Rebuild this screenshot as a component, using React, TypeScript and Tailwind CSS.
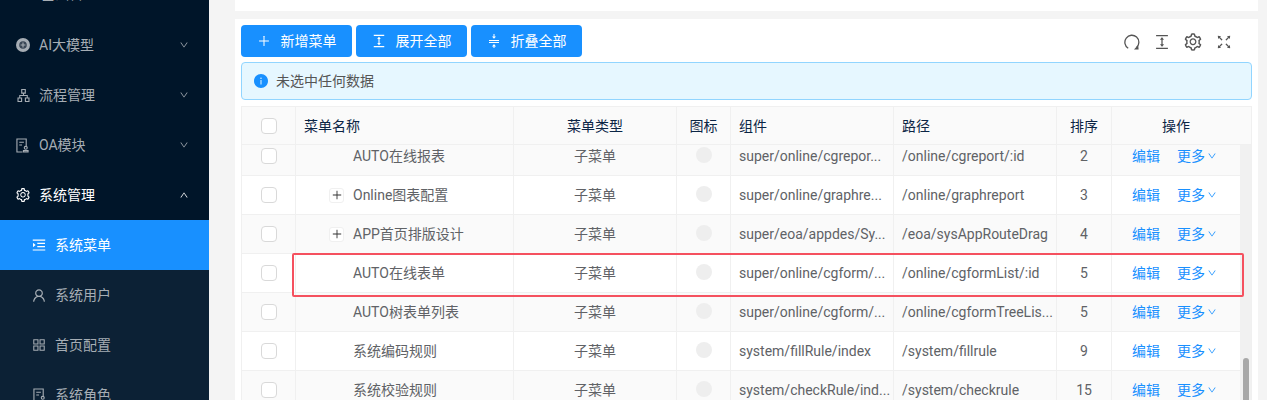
import React from "react";
import {
  AiFillInfoCircle,
  AiOutlineApartment,
  AiOutlineAppstore,
  AiOutlineColumnHeight,
  AiOutlineDown,
  AiOutlineFullscreen,
  AiOutlineMenuUnfold,
  AiOutlinePlus,
  AiOutlineSetting,
  AiOutlineUp,
  AiOutlineUser,
} from "react-icons/ai";

const DocIcon = ({ className }: { className?: string }) => (
  <svg viewBox="0 0 14 16" className={className} fill="none" stroke="currentColor" strokeWidth="1.2">
    <path d="M7 15H1V1h10v8" />
    <path d="M3.5 4.5h5M3.5 7.5h3" />
    <circle cx="10.5" cy="10.5" r="1.6" />
    <path d="M8 15v-1.5h5V15z" />
  </svg>
);

const AiModelIcon = ({ className }: { className?: string }) => (
  <svg viewBox="0 0 14 14" className={className}>
    <circle cx="7" cy="7" r="7" fill="currentColor" />
    <circle cx="7" cy="7" r="3.8" fill="#3a4756" />
    <path d="M7 4.6v4.8M4.6 7h4.8" stroke="currentColor" strokeWidth="1.1" />
  </svg>
);

const RefreshIcon = ({ className }: { className?: string }) => (
  <svg viewBox="0 0 16 16" className={className} fill="none">
    <path d="M4.2 14.2A7 7 0 1 1 12.6 13.4" stroke="currentColor" strokeWidth="1.3" />
    <path d="M10 15.6l4.6-.2-.4-4.4z" fill="currentColor" />
  </svg>
);

const CollapseIcon = ({ className }: { className?: string }) => (
  <svg viewBox="0 0 14 14" className={className} fill="currentColor">
    <path d="M2 5.9h10v1H2zM2 7.9h10v1H2z" />
    <path d="M7 4.7L5 2.4h1.5V0h1v2.4H9zM7 10.1l2 2.3H7.5V14h-1v-1.6H5z" />
  </svg>
);

const topMenu = [
  { label: "AI大模型", icon: <AiModelIcon className="h-[14px] w-[14px]" /> },
  { label: "流程管理", icon: <AiOutlineApartment className="text-[15px]" /> },
  { label: "OA模块", icon: <DocIcon className="h-[15px] w-[13px]" /> },
];

const subMenu = [
  { label: "系统用户", icon: <AiOutlineUser className="text-[17px]" /> },
  { label: "首页配置", icon: <AiOutlineAppstore className="text-[16px]" /> },
  { label: "系统角色", icon: <DocIcon className="h-[15px] w-[13px]" /> },
];

const rows = [
  { name: "AUTO在线报表", comp: "super/online/cgrepor...", path: "/online/cgreport/:id", sort: 2 },
  { name: "Online图表配置", comp: "super/online/graphre...", path: "/online/graphreport", sort: 3, tree: true },
  { name: "APP首页排版设计", comp: "super/eoa/appdes/Sy...", path: "/eoa/sysAppRouteDrag", sort: 4, tree: true },
  { name: "AUTO在线表单", comp: "super/online/cgform/...", path: "/online/cgformList/:id", sort: 5 },
  { name: "AUTO树表单列表", comp: "super/online/cgform/...", path: "/online/cgformTreeLis...", sort: 5 },
  { name: "系统编码规则", comp: "system/fillRule/index", path: "/system/fillrule", sort: 9 },
  { name: "系统校验规则", comp: "system/checkRule/ind...", path: "/system/checkrule", sort: 15 },
];

const grid = "grid grid-cols-[54px_218px_163px_54px_163px_163px_55px_1fr]";
const cell = "flex items-center border-r border-[#f0f0f0] min-w-0";

const Checkbox = () => (
  <span className="h-4 w-4 rounded-[4px] border border-[#d9d9d9] bg-white" />
);

const ToolButton = ({ icon, label }: { icon: React.ReactNode; label: string }) => (
  <button className="flex h-8 w-[111px] items-center justify-center gap-[10px] rounded-[4px] bg-[#1890ff] text-sm text-white">
    {icon}
    <span>{label}</span>
  </button>
);

export default function App() {
  return (
    <div className="flex h-[400px] w-[1267px] overflow-hidden bg-[#f4f4f4] font-['Roboto','Noto_Sans_CJK_SC',sans-serif] text-sm">
      <aside className="w-[209px] shrink-0 bg-[#001529] text-[#a6adb4]">
        <div className="-mt-[30px] flex h-[50px] items-center pb-[3px] pl-[41px]">
          <span>基础管理</span>
        </div>
        {topMenu.map((item) => (
          <div key={item.label} className="flex h-[50px] items-center pl-4 pr-5">
            <span className="flex w-[23px] justify-start">{item.icon}</span>
            <span className="flex-1">{item.label}</span>
            <AiOutlineDown className="text-[10px]" />
          </div>
        ))}
        <div className="flex h-[50px] items-center pl-[15px] pr-5 text-white">
          <AiOutlineSetting className="mr-2 text-[16px]" />
          <span className="flex-1">系统管理</span>
          <AiOutlineUp className="text-[10px]" />
        </div>
        <div className="bg-[#0c2135]">
          <div className="flex h-[50px] items-center bg-[#1890ff] pl-[31px] text-white">
            <AiOutlineMenuUnfold className="mr-2 text-[16px]" />
            <span>系统菜单</span>
          </div>
          {subMenu.map((item) => (
            <div key={item.label} className="flex h-[50px] items-center pl-[31px]">
              <span className="mr-2 flex w-4 justify-center">{item.icon}</span>
              <span>{item.label}</span>
            </div>
          ))}
        </div>
      </aside>

      <main className="relative flex-1 pl-[26px] pr-[9px]">
        <div className="h-[11px] bg-white" />
        <section className="mt-2 h-[400px] bg-white px-[6px] pt-[6px]">
          <div className="flex h-8 items-center gap-1">
            <ToolButton icon={<AiOutlinePlus className="text-sm" />} label="新增菜单" />
            <ToolButton icon={<AiOutlineColumnHeight className="-mx-px text-base" />} label="展开全部" />
            <ToolButton icon={<CollapseIcon className="h-[14px] w-[14px]" />} label="折叠全部" />
            <div className="ml-auto flex items-center gap-3 pr-[19px] pt-[2px] text-[#555]">
              <RefreshIcon className="mr-px h-4 w-4" />
              <AiOutlineColumnHeight className="text-[18px]" />
              <AiOutlineSetting className="text-[20px]" />
              <AiOutlineFullscreen className="text-[18px]" />
            </div>
          </div>

          <div className="mt-[5px] flex h-[38px] items-center gap-[7px] rounded-[4px] border border-[#91d5ff] bg-[#e6f7ff] pl-[11px] text-[#555]">
            <AiFillInfoCircle className="text-[16px] text-[#1890ff]" />
            <span>未选中任何数据</span>
          </div>

          <div className="mt-[6px] border-x border-t border-[#f0f0f0]">
            <div className={`${grid} h-[38px] border-b border-[#f0f0f0] bg-[#fafafa] text-[#0b2545]`}>
              <div className={`${cell} justify-center`}><Checkbox /></div>
              <div className={`${cell} pl-2`}>菜单名称</div>
              <div className={`${cell} justify-center`}>菜单类型</div>
              <div className={`${cell} justify-center`}>图标</div>
              <div className={`${cell} pl-2`}>组件</div>
              <div className={`${cell} pl-2`}>路径</div>
              <div className={`${cell} justify-center`}>排序</div>
              <div className="flex items-center justify-center pr-[11px]">操作</div>
            </div>
            <div className="flex h-[256px] overflow-hidden">
              <div className="-mt-2 min-w-0 flex-1">
                {rows.map((row, i) => (
                  <div
                    key={row.name}
                    className={`${grid} h-[39px] border-b border-[#f0f0f0] text-[#606266] ${i % 2 === 0 ? "bg-[#fafafa]" : "bg-white"}`}
                  >
                    <div className={`${cell} justify-center`}><Checkbox /></div>
                    <div className={`${cell} pl-[33px]`}>
                      <span className="flex w-6 justify-start">
                        {row.tree && (
                          <span className="flex h-[15px] w-[15px] items-center justify-center rounded-[3px] border border-[#f0f0f0] bg-white">
                            <AiOutlinePlus className="text-xs text-[#333]" />
                          </span>
                        )}
                      </span>
                      <span>{row.name}</span>
                    </div>
                    <div className={`${cell} justify-center`}>子菜单</div>
                    <div className={`${cell} justify-center pb-[3px]`}>
                      <span className="h-4 w-4 rounded-full bg-[#eeeeee]" />
                    </div>
                    <div className={`${cell} pl-2 whitespace-nowrap`}>{row.comp}</div>
                    <div className={`${cell} pl-2 whitespace-nowrap`}>{row.path}</div>
                    <div className={`${cell} justify-center`}>{row.sort}</div>
                    <div className="flex items-center pl-5 text-[#1890ff]">
                      <span>编辑</span>
                      <span className="ml-[17px]">更多</span>
                      <AiOutlineDown className="ml-[2px] text-[10px]" />
                    </div>
                  </div>
                ))}
              </div>
              <div className="w-[11px] shrink-0 bg-[#f1f1f1] pl-[3px] pt-[213px]">
                <div className="h-[42px] w-[6px] rounded-t-[3px] bg-[#a8a8a8]" />
              </div>
            </div>
          </div>
        </section>
        <div className="absolute left-[83px] top-[253px] h-[44px] w-[952px] rounded-[2px] border-2 border-[#f5515f]" />
      </main>
    </div>
  );
}
